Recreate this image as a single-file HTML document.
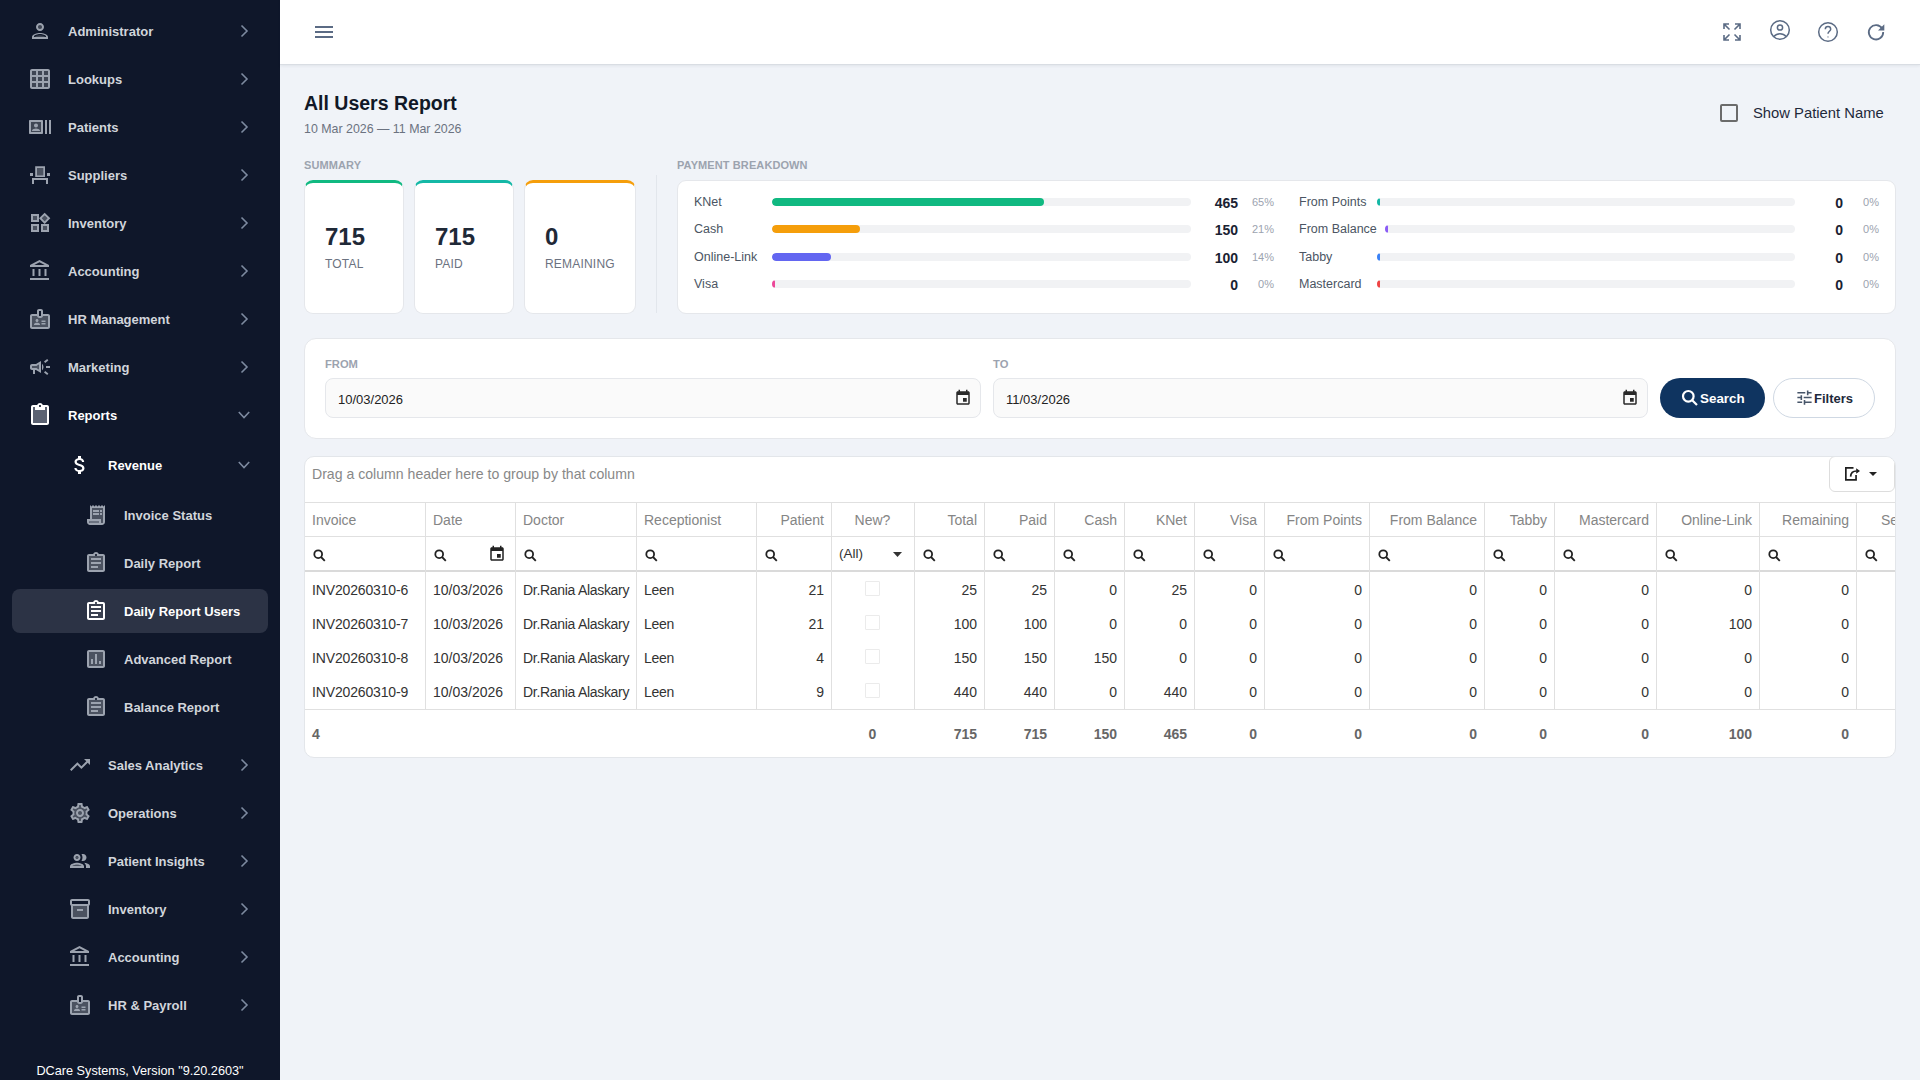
<!DOCTYPE html>
<html><head><meta charset="utf-8">
<style>
*{box-sizing:border-box;margin:0;padding:0}
html,body{width:1920px;height:1080px;overflow:hidden;background:#f0f3f8;font-family:"Liberation Sans",sans-serif}
body{position:relative}
.abs{position:absolute}
#sb{position:absolute;left:0;top:0;width:280px;height:1080px;background:#0f172a;color:#d1d5db}
#sb .tx{position:absolute;height:44px;line-height:44px;font-size:13px;font-weight:bold;white-space:nowrap}
#sb .w{color:#fff}
#ver{position:absolute;left:0;width:280px;top:1063px;line-height:16px;text-align:center;font-size:12.7px;color:#fff;white-space:nowrap}
#hdr{position:absolute;left:280px;top:0;width:1640px;height:65px;background:#fff;border-bottom:1px solid #d9dde3;box-shadow:0 1px 3px rgba(15,23,42,.07)}
.hb{position:absolute;left:315px;width:18px;height:2px;background:#5b6b84;border-radius:0}
.t1{position:absolute;left:304px;top:90px;font-size:19.5px;font-weight:bold;color:#111827;white-space:nowrap;line-height:26px}
.t2{position:absolute;left:304px;top:121px;font-size:12.4px;color:#6b7280;white-space:nowrap;line-height:16px}
.lbl{position:absolute;font-size:11px;font-weight:bold;color:#9ca3af;letter-spacing:.1px;white-space:nowrap;line-height:14px}
.card{position:absolute;background:#fff;border:1px solid #e5e7eb;border-radius:9px;overflow:hidden}
.scard{top:180px;height:134px;border-top:3px solid}
.scard .bar{position:absolute;left:-1px;right:-1px;top:0;height:3px}
.scard .num{position:absolute;left:20px;top:40px;font-size:24px;font-weight:bold;color:#1f2937;line-height:28px}
.scard .sl{position:absolute;left:20px;top:73.5px;letter-spacing:.2px;font-size:12px;color:#6b7280;line-height:14px;white-space:nowrap}
.prow{position:absolute;height:20px}
.prow .pl{position:absolute;left:0;top:0;line-height:20px;font-size:12.5px;color:#4b5563;white-space:nowrap}
.prow .tr{position:absolute;top:6px;height:8px;border-radius:4px;background:#f1f2f4;overflow:hidden}
.prow .fl{position:absolute;left:0;top:0;height:8px;border-radius:4px}
.prow .pv{position:absolute;top:.5px;line-height:20px;font-size:14px;font-weight:bold;color:#1a2232;text-align:right;width:40px}
.prow .pp{position:absolute;top:0;line-height:20px;font-size:11px;color:#9ca3af;text-align:right;width:30px}
.flab{position:absolute;top:358px;font-size:11.2px;font-weight:bold;color:#9ca3af;line-height:12px}
.inp{position:absolute;top:378px;height:40px;background:#fafafa;border:1px solid #e5e7eb;border-radius:8px}
.inp .v{position:absolute;left:12px;top:1px;line-height:40px;font-size:13px;color:#222}
.btn{position:absolute;top:378px;height:40px;border-radius:20px}
#tbl{position:absolute;left:304px;top:456px;width:1592px;height:302px;background:#fff;border:1px solid #e3e6ea;border-radius:10px;overflow:hidden;font-size:14px;color:#333}
#tbl .c{position:absolute;white-space:nowrap;line-height:34px;height:34px}
#tbl .h{color:#858585;font-size:14px;letter-spacing:0}
#tbl .vl{position:absolute;width:1px;background:#e0e0e0}
#tbl .hl{position:absolute;left:0;width:1590px;height:1px;background:#e0e0e0}
#tbl .f{font-weight:bold;color:#666;font-size:14px;letter-spacing:0}

</style></head><body>
<div id="sb">
<svg class="abs" style="left:28px;top:19px;width:24px;height:24px;color:#9ca3af" viewBox="0 0 24 24" fill="currentColor"><circle cx="12" cy="8" r="2.2" fill="#3d4452"/><path fill="#3d4452" d="M6.3 18.1c1-1 3.4-1.9 5.7-1.9s4.7.9 5.7 1.9z"/><path d="M12 14c-2.67 0-8 1.34-8 4v2h16v-2c0-2.66-5.33-4-8-4zm6 4H6v-.99c.2-.72 3.3-2.01 6-2.01s5.8 1.29 6 2v1zM12 4C9.79 4 8 5.79 8 8s1.79 4 4 4 4-1.79 4-4-1.79-4-4-4zm0 6c-1.1 0-2-.9-2-2s.9-2 2-2 2 .9 2 2-.9 2-2 2z"/></svg>
<div class="tx" style="left:68px;top:10px">Administrator</div>
<svg class="abs" style="left:240px;top:24px;width:9px;height:14px" viewBox="0 0 9 14"><polyline points="1.5,1.5 7,7 1.5,12.5" fill="none" stroke="#7d8aa0" stroke-width="1.6"/></svg>
<svg class="abs" style="left:28px;top:67px;width:24px;height:24px;color:#9ca3af" viewBox="0 0 24 24" fill="currentColor"><rect x="3" y="3" width="18" height="18" fill="#3f4654"/><path d="M20 2H4c-1.1 0-2 .9-2 2v16c0 1.1.9 2 2 2h16c1.1 0 2-.9 2-2V4c0-1.1-.9-2-2-2zM8 20H4v-4h4v4zm0-6H4v-4h4v4zm0-6H4V4h4v4zm6 12h-4v-4h4v4zm0-6h-4v-4h4v4zm0-6h-4V4h4v4zm6 12h-4v-4h4v4zm0-6h-4v-4h4v4zm0-6h-4V4h4v4z"/></svg>
<div class="tx" style="left:68px;top:58px">Lookups</div>
<svg class="abs" style="left:240px;top:72px;width:9px;height:14px" viewBox="0 0 9 14"><polyline points="1.5,1.5 7,7 1.5,12.5" fill="none" stroke="#7d8aa0" stroke-width="1.6"/></svg>
<svg class="abs" style="left:28px;top:115px;width:24px;height:24px;color:#9ca3af" viewBox="0 0 24 24" fill="currentColor"><rect x="2" y="6" width="12" height="12" fill="#3f4654"/><path d="M21 5v14h2V5h-2zm-4 14h2V5h-2v14zM14 5H2c-.55 0-1 .45-1 1v12c0 .55.45 1 1 1h12c.55 0 1-.45 1-1V6c0-.55-.45-1-1-1zm-1 12H3V7h10v10zM8 8.5c1.1 0 2 .9 2 2s-.9 2-2 2-2-.9-2-2 .9-2 2-2zM12 16H4v-.5c0-1.33 2.67-2 4-2s4 .67 4 2z"/></svg>
<div class="tx" style="left:68px;top:106px">Patients</div>
<svg class="abs" style="left:240px;top:120px;width:9px;height:14px" viewBox="0 0 9 14"><polyline points="1.5,1.5 7,7 1.5,12.5" fill="none" stroke="#7d8aa0" stroke-width="1.6"/></svg>
<svg class="abs" style="left:28px;top:163px;width:24px;height:24px;color:#9ca3af" viewBox="0 0 24 24" fill="currentColor"><path fill="#4b5260" d="M9 5h6v7H9z"/><path fill-rule="evenodd" d="M7.2 3.2h9.8v10.8H7.2zM9 5v7.2h6.2V5z"/><path d="M2 10h3v3H2zM19 10h3v3h-3zM4 15h16v2H4zM4 15h2v6H4zM18 15h2v6h-2z"/></svg>
<div class="tx" style="left:68px;top:154px">Suppliers</div>
<svg class="abs" style="left:240px;top:168px;width:9px;height:14px" viewBox="0 0 9 14"><polyline points="1.5,1.5 7,7 1.5,12.5" fill="none" stroke="#7d8aa0" stroke-width="1.6"/></svg>
<svg class="abs" style="left:28px;top:211px;width:24px;height:24px;color:#9ca3af" viewBox="0 0 24 24" fill="currentColor"><path fill="#4b5260" d="M5 5h4v4H5zm10 10h4v4h-4zM5 15h4v4H5zM16.66 4.52l-2.83 2.82 2.83 2.83 2.83-2.83z"/><path d="M16.66 1.69L11 7.34 16.66 13l5.66-5.66-5.66-5.65zm-2.83 5.65l2.83-2.83 2.83 2.83-2.83 2.83-2.83-2.83zM3 3v8h8V3H3zm6 6H5V5h4v4zM3 21h8v-8H3v8zm2-6h4v4H5v-4zm8-2v8h8v-8h-8zm6 6h-4v-4h4v4z"/></svg>
<div class="tx" style="left:68px;top:202px">Inventory</div>
<svg class="abs" style="left:240px;top:216px;width:9px;height:14px" viewBox="0 0 9 14"><polyline points="1.5,1.5 7,7 1.5,12.5" fill="none" stroke="#7d8aa0" stroke-width="1.6"/></svg>
<svg class="abs" style="left:28px;top:259px;width:24px;height:24px;color:#9ca3af" viewBox="0 0 24 24" fill="currentColor"><path d="M6.5 10h-2v7h2v-7zm6 0h-2v7h2v-7zm8.5 9H2v2h19v-2zm-2.5-9h-2v7h2v-7zm-7-6.74L16.71 6H6.29l5.21-2.74m0-2.26L2 6v2h19V6l-9.5-5z"/></svg>
<div class="tx" style="left:68px;top:250px">Accounting</div>
<svg class="abs" style="left:240px;top:264px;width:9px;height:14px" viewBox="0 0 9 14"><polyline points="1.5,1.5 7,7 1.5,12.5" fill="none" stroke="#7d8aa0" stroke-width="1.6"/></svg>
<svg class="abs" style="left:28px;top:307px;width:24px;height:24px;color:#9ca3af" viewBox="0 0 24 24" fill="currentColor"><path fill="#4b5260" d="M4 9h5c0 1.1.9 2 2 2h2c1.1 0 2-.9 2-2h5v11H4z"/><path d="M20 7h-5V4c0-1.1-.9-2-2-2h-2c-1.1 0-2 .9-2 2v3H4c-1.1 0-2 .9-2 2v11c0 1.1.9 2 2 2h16c1.1 0 2-.9 2-2V9c0-1.1-.9-2-2-2zM11 7V4h2v3 2h-2V7zm9 13H4V9h5c0 1.1.9 2 2 2h2c1.1 0 2-.9 2-2h5v11zM9 15c.83 0 1.5-.67 1.5-1.5S9.83 12 9 12s-1.5.67-1.5 1.5S8.17 15 9 15zm2.08 1.18c-.64-.28-1.34-.43-2.08-.43s-1.44.15-2.08.43C6.36 16.42 6 16.96 6 17.57V18h6v-.43c0-.61-.36-1.15-.92-1.39zM13.5 13.5h4V15h-4zm0 2.5h4v1.5h-4z"/></svg>
<div class="tx" style="left:68px;top:298px">HR Management</div>
<svg class="abs" style="left:240px;top:312px;width:9px;height:14px" viewBox="0 0 9 14"><polyline points="1.5,1.5 7,7 1.5,12.5" fill="none" stroke="#7d8aa0" stroke-width="1.6"/></svg>
<svg class="abs" style="left:28px;top:355px;width:24px;height:24px;color:#9ca3af" viewBox="0 0 24 24" fill="currentColor"><path fill="#4b5260" d="M9.03 10.71L11 9.53v4.94l-1.97-1.18-.48-.29H4v-2h4.55z"/><path d="M18 11v2h4v-2h-4zm-2 6.61c.96.71 2.21 1.65 3.2 2.39.4-.53.8-1.07 1.2-1.6-.99-.74-2.24-1.68-3.2-2.4-.4.54-.8 1.08-1.2 1.61zM20.4 5.6c-.4-.53-.8-1.07-1.2-1.6-.99.74-2.24 1.68-3.2 2.4.4.53.8 1.07 1.2 1.6.96-.72 2.21-1.65 3.2-2.4zM4 9c-1.1 0-2 .9-2 2v2c0 1.1.9 2 2 2h1v4h2v-4h1l5 3V6L8 9H4zm5.03 1.71L11 9.53v4.94l-1.97-1.18-.48-.29H4v-2h4.55l.48-.29zM15.5 12c0-1.33-.58-2.53-1.5-3.35v6.69c.92-.81 1.5-2.01 1.5-3.34z"/></svg>
<div class="tx" style="left:68px;top:346px">Marketing</div>
<svg class="abs" style="left:240px;top:360px;width:9px;height:14px" viewBox="0 0 9 14"><polyline points="1.5,1.5 7,7 1.5,12.5" fill="none" stroke="#7d8aa0" stroke-width="1.6"/></svg>
<svg class="abs" style="left:28px;top:403px;width:24px;height:24px;color:#fff" viewBox="0 0 24 24" fill="currentColor"><path fill="#5b6272" d="M17 7H7V4H5v16h14V4h-2z"/><path fill="#fff" d="M19 2h-4.18C14.4.84 13.3 0 12 0S9.6.84 9.18 2H5c-1.1 0-2 .9-2 2v16c0 1.1.9 2 2 2h14c1.1 0 2-.9 2-2V4c0-1.1-.9-2-2-2zm-7 0c.55 0 1 .45 1 1s-.45 1-1 1-1-.45-1-1 .45-1 1-1zm7 18H5V4h2v3h10V4h2v16z"/></svg>
<div class="tx w" style="left:68px;top:394px">Reports</div>
<svg class="abs" style="left:238px;top:411px;width:12px;height:8px" viewBox="0 0 12 8"><polyline points="0.8,1 6,6.5 11.2,1" fill="none" stroke="#7d8aa0" stroke-width="1.6"/></svg>
<svg class="abs" style="left:68px;top:453px;width:24px;height:24px;color:#fff" viewBox="0 0 24 24" fill="currentColor"><path d="M11.8 10.9c-2.27-.59-3-1.2-3-2.15 0-1.09 1.01-1.85 2.7-1.85 1.78 0 2.44.85 2.5 2.1h2.21c-.07-1.72-1.12-3.3-3.21-3.81V3h-3v2.16c-1.94.42-3.5 1.68-3.5 3.61 0 2.31 1.91 3.46 4.7 4.13 2.5.6 3 1.48 3 2.41 0 .69-.49 1.79-2.7 1.79-2.06 0-2.87-.92-2.98-2.1h-2.2c.12 2.19 1.76 3.42 3.68 3.83V21h3v-2.15c1.95-.37 3.5-1.5 3.5-3.55 0-2.84-2.43-3.81-4.7-4.4z"/></svg>
<div class="tx w" style="left:108px;top:444px">Revenue</div>
<svg class="abs" style="left:238px;top:461px;width:12px;height:8px" viewBox="0 0 12 8"><polyline points="0.8,1 6,6.5 11.2,1" fill="none" stroke="#7d8aa0" stroke-width="1.6"/></svg>
<div class="abs" style="left:12px;top:589px;width:256px;height:44px;background:#2c3345;border-radius:8px"></div>
<svg class="abs" style="left:84px;top:503px;width:24px;height:24px;color:#9ca3af" viewBox="0 0 24 24" fill="currentColor"><path fill="#4b5260" d="M8 5h11v14c0 .55-.45 1-1 1s-1-.45-1-1v-3H8z"/><path d="M19.5 3.5L18 2l-1.5 1.5L15 2l-1.5 1.5L12 2l-1.5 1.5L9 2 7.5 3.5 6 2v14H3v3c0 1.66 1.34 3 3 3h12c1.66 0 3-1.34 3-3V2l-1.5 1.5zM15 20H6c-.55 0-1-.45-1-1v-1h10v2zm4-1c0 .55-.45 1-1 1s-1-.45-1-1v-3H8V5h11v14z"/><path d="M9 7h6v2H9zm7 0h2v2h-2zm-7 3h6v2H9zm7 0h2v2h-2z"/><path fill="#6b7280" d="M5 18h10v2H6c-.55 0-1-.45-1-1z"/></svg>
<div class="tx" style="left:124px;top:494px">Invoice Status</div>
<svg class="abs" style="left:84px;top:551px;width:24px;height:24px;color:#9ca3af" viewBox="0 0 24 24" fill="currentColor"><path fill="#4b5260" d="M5 5h14v14H5z"/><path d="M19 3h-4.18C14.4 1.84 13.3 1 12 1s-2.4.84-2.82 2H5c-1.1 0-2 .9-2 2v14c0 1.1.9 2 2 2h14c1.1 0 2-.9 2-2V5c0-1.1-.9-2-2-2zm-7 0c.55 0 1 .45 1 1s-.45 1-1 1-1-.45-1-1 .45-1 1-1zm7 16H5V5h14v14zM7 15h7v2H7zm0-4h10v2H7zm0-4h10v2H7z"/></svg>
<div class="tx" style="left:124px;top:542px">Daily Report</div>
<svg class="abs" style="left:84px;top:599px;width:24px;height:24px;color:#fff" viewBox="0 0 24 24" fill="currentColor"><path fill="#3a4050" d="M5 5h14v14H5z"/><path fill="#fff" d="M19 3h-4.18C14.4 1.84 13.3 1 12 1s-2.4.84-2.82 2H5c-1.1 0-2 .9-2 2v14c0 1.1.9 2 2 2h14c1.1 0 2-.9 2-2V5c0-1.1-.9-2-2-2zm-7 0c.55 0 1 .45 1 1s-.45 1-1 1-1-.45-1-1 .45-1 1-1zm7 16H5V5h14v14zM7 15h7v2H7zm0-4h10v2H7zm0-4h10v2H7z"/></svg>
<div class="tx w" style="left:124px;top:590px">Daily Report Users</div>
<svg class="abs" style="left:84px;top:647px;width:24px;height:24px;color:#9ca3af" viewBox="0 0 24 24" fill="currentColor"><path fill="#4b5260" d="M5 5h14v14H5z"/><path d="M19 3H5c-1.1 0-2 .9-2 2v14c0 1.1.9 2 2 2h14c1.1 0 2-.9 2-2V5c0-1.1-.9-2-2-2zm0 16H5V5h14v14zM7 12h2v5H7zm4-5h2v10h-2zm4 7h2v3h-2z"/></svg>
<div class="tx" style="left:124px;top:638px">Advanced Report</div>
<svg class="abs" style="left:84px;top:695px;width:24px;height:24px;color:#9ca3af" viewBox="0 0 24 24" fill="currentColor"><path fill="#4b5260" d="M5 5h14v14H5z"/><path d="M19 3h-4.18C14.4 1.84 13.3 1 12 1s-2.4.84-2.82 2H5c-1.1 0-2 .9-2 2v14c0 1.1.9 2 2 2h14c1.1 0 2-.9 2-2V5c0-1.1-.9-2-2-2zm-7 0c.55 0 1 .45 1 1s-.45 1-1 1-1-.45-1-1 .45-1 1-1zm7 16H5V5h14v14zM7 15h7v2H7zm0-4h10v2H7zm0-4h10v2H7z"/></svg>
<div class="tx" style="left:124px;top:686px">Balance Report</div>
<svg class="abs" style="left:68px;top:753px;width:24px;height:24px;color:#9ca3af" viewBox="0 0 24 24" fill="currentColor"><path d="M16 6l2.29 2.29-4.88 4.88-4-4L2 16.59 3.41 18l6-6 4 4 6.3-6.29L22 12V6z"/></svg>
<div class="tx" style="left:108px;top:744px">Sales Analytics</div>
<svg class="abs" style="left:240px;top:758px;width:9px;height:14px" viewBox="0 0 9 14"><polyline points="1.5,1.5 7,7 1.5,12.5" fill="none" stroke="#7d8aa0" stroke-width="1.6"/></svg>
<svg class="abs" style="left:68px;top:801px;width:24px;height:24px;color:#9ca3af" viewBox="0 0 24 24" fill="currentColor"><path fill="#4b5260" d="M17.45 11.27c.04.31.05.52.05.73s-.02.43-.05.73l-.14 1.13.89.7 1.08.84-.7 1.21-1.27-.51-1.04-.42-.9.68c-.43.32-.84.56-1.25.73l-1.06.43-.16 1.13-.2 1.35h-1.4l-.19-1.35-.16-1.13-1.06-.43c-.43-.18-.83-.41-1.23-.71l-.91-.7-1.06.43-1.27.51-.7-1.21 1.08-.84.89-.7-.14-1.13c-.03-.31-.05-.54-.05-.74s.02-.43.05-.73l.14-1.13-.89-.7-1.08-.84.7-1.21 1.27.51 1.04.42.9-.68c.43-.32.84-.56 1.25-.73l1.06-.43.16-1.13.2-1.35h1.39l.19 1.35.16 1.13 1.06.43c.43.18.83.41 1.23.71l.91.7 1.06-.43 1.27-.51.7 1.21-1.07.85-.89.7.14 1.13z"/><path d="M19.43 12.98c.04-.32.07-.64.07-.98 0-.34-.03-.66-.07-.98l2.11-1.65c.19-.15.24-.42.12-.64l-2-3.46c-.09-.16-.26-.25-.44-.25-.06 0-.12.01-.17.03l-2.49 1c-.52-.4-1.08-.73-1.69-.98l-.38-2.65C14.46 2.18 14.25 2 14 2h-4c-.25 0-.46.18-.49.42l-.38 2.65c-.61.25-1.170.59-1.69.98l-2.49-1c-.06-.02-.12-.03-.18-.03-.17 0-.34.09-.43.25l-2 3.46c-.13.22-.07.49.12.64l2.11 1.65c-.04.32-.07.65-.07.98 0 .33.03.66.07.98l-2.11 1.65c-.19.15-.24.42-.12.64l2 3.46c.09.16.26.25.44.25.06 0 .12-.01.17-.03l2.49-1c.52.4 1.08.73 1.69.98l.38 2.65c.03.24.24.42.49.42h4c.25 0 .46-.18.49-.42l.38-2.65c.61-.25 1.17-.59 1.690-.98l2.49 1c.06.02.12.03.18.03.17 0 .34-.09.43-.25l2-3.46c.12-.22.07-.49-.12-.64l-2.11-1.65zm-1.98-1.71c.04.31.05.52.05.73 0 .21-.02.43-.05.73l-.14 1.13.89.7 1.08.84-.7 1.21-1.27-.51-1.04-.42-.9.68c-.43.32-.84.56-1.25.73l-1.06.43-.16 1.13-.2 1.35h-1.4l-.19-1.35-.16-1.13-1.06-.43c-.43-.18-.83-.41-1.23-.71l-.91-.7-1.06.43-1.27.51-.7-1.21 1.08-.84.89-.7-.14-1.13c-.03-.31-.05-.54-.05-.74s.02-.43.05-.73l.14-1.13-.89-.7-1.08-.84.7-1.21 1.27.51 1.04.42.9-.68c.43-.32.84-.56 1.25-.73l1.06-.43.16-1.13.2-1.35h1.39l.19 1.35.16 1.13 1.06.43c.43.18.83.41 1.23.71l.91.7 1.06-.43 1.27-.51.7 1.21-1.07.85-.89.7.14 1.13zM12 8c-2.21 0-4 1.79-4 4s1.79 4 4 4 4-1.79 4-4-1.79-4-4-4zm0 6c-1.1 0-2-.9-2-2s.9-2 2-2 2 .9 2 2-.9 2-2 2z"/></svg>
<div class="tx" style="left:108px;top:792px">Operations</div>
<svg class="abs" style="left:240px;top:806px;width:9px;height:14px" viewBox="0 0 9 14"><polyline points="1.5,1.5 7,7 1.5,12.5" fill="none" stroke="#7d8aa0" stroke-width="1.6"/></svg>
<svg class="abs" style="left:68px;top:849px;width:24px;height:24px;color:#9ca3af" viewBox="0 0 24 24" fill="currentColor"><path fill="#4b5260" d="M9 8.5m-1.5 0a1.5 1.5 0 1 0 3 0a1.5 1.5 0 1 0-3 0M4.34 17c.84-.58 2.87-1.25 4.66-1.25s3.82.67 4.66 1.25z"/><path d="M9 13.75c-2.34 0-7 1.17-7 3.5V19h14v-1.75c0-2.33-4.66-3.5-7-3.5zM4.34 17c.84-.58 2.87-1.25 4.66-1.25s3.82.67 4.66 1.25H4.34zM9 12c1.93 0 3.5-1.57 3.5-3.5S10.93 5 9 5 5.5 6.57 5.5 8.5 7.07 12 9 12zm0-5c.83 0 1.5.67 1.5 1.5S9.83 10 9 10s-1.5-.67-1.5-1.5S8.170 7 9 7zm7.04 6.81c1.16.84 1.96 1.96 1.96 3.44V19h4v-1.75c0-2.02-3.5-3.17-5.96-3.44zM15 12c1.93 0 3.5-1.57 3.5-3.5S16.93 5 15 5c-.54 0-1.04.13-1.5.35.63.89 1 1.98 1 3.15s-.37 2.26-1 3.15c.46.22.96.35 1.5.35z"/></svg>
<div class="tx" style="left:108px;top:840px">Patient Insights</div>
<svg class="abs" style="left:240px;top:854px;width:9px;height:14px" viewBox="0 0 9 14"><polyline points="1.5,1.5 7,7 1.5,12.5" fill="none" stroke="#7d8aa0" stroke-width="1.6"/></svg>
<svg class="abs" style="left:68px;top:897px;width:24px;height:24px;color:#9ca3af" viewBox="0 0 24 24" fill="currentColor"><path fill="#4b5260" d="M5 9h14v11H5z"/><path d="M20 2H4c-1 0-2 .9-2 2v3.01c0 .72.43 1.34 1 1.69V20c0 1.1 1.1 2 2 2h14c.9 0 2-.9 2-2V8.7c.57-.35 1-.97 1-1.69V4c0-1.1-1-2-2-2zm-1 18H5V9h14v11zm1-13H4V4h16v3z"/><path d="M9 12h6v2H9z"/></svg>
<div class="tx" style="left:108px;top:888px">Inventory</div>
<svg class="abs" style="left:240px;top:902px;width:9px;height:14px" viewBox="0 0 9 14"><polyline points="1.5,1.5 7,7 1.5,12.5" fill="none" stroke="#7d8aa0" stroke-width="1.6"/></svg>
<svg class="abs" style="left:68px;top:945px;width:24px;height:24px;color:#9ca3af" viewBox="0 0 24 24" fill="currentColor"><path d="M6.5 10h-2v7h2v-7zm6 0h-2v7h2v-7zm8.5 9H2v2h19v-2zm-2.5-9h-2v7h2v-7zm-7-6.74L16.71 6H6.29l5.21-2.74m0-2.26L2 6v2h19V6l-9.5-5z"/></svg>
<div class="tx" style="left:108px;top:936px">Accounting</div>
<svg class="abs" style="left:240px;top:950px;width:9px;height:14px" viewBox="0 0 9 14"><polyline points="1.5,1.5 7,7 1.5,12.5" fill="none" stroke="#7d8aa0" stroke-width="1.6"/></svg>
<svg class="abs" style="left:68px;top:993px;width:24px;height:24px;color:#9ca3af" viewBox="0 0 24 24" fill="currentColor"><path fill="#4b5260" d="M4 9h5c0 1.1.9 2 2 2h2c1.1 0 2-.9 2-2h5v11H4z"/><path d="M20 7h-5V4c0-1.1-.9-2-2-2h-2c-1.1 0-2 .9-2 2v3H4c-1.1 0-2 .9-2 2v11c0 1.1.9 2 2 2h16c1.1 0 2-.9 2-2V9c0-1.1-.9-2-2-2zM11 7V4h2v3 2h-2V7zm9 13H4V9h5c0 1.1.9 2 2 2h2c1.1 0 2-.9 2-2h5v11zM9 15c.83 0 1.5-.67 1.5-1.5S9.83 12 9 12s-1.5.67-1.5 1.5S8.17 15 9 15zm2.08 1.18c-.64-.28-1.34-.43-2.08-.43s-1.44.15-2.08.43C6.36 16.42 6 16.96 6 17.57V18h6v-.43c0-.61-.36-1.15-.92-1.39zM13.5 13.5h4V15h-4zm0 2.5h4v1.5h-4z"/></svg>
<div class="tx" style="left:108px;top:984px">HR &amp; Payroll</div>
<svg class="abs" style="left:240px;top:998px;width:9px;height:14px" viewBox="0 0 9 14"><polyline points="1.5,1.5 7,7 1.5,12.5" fill="none" stroke="#7d8aa0" stroke-width="1.6"/></svg>
<div id="ver">DCare Systems, Version "9.20.2603"</div>
</div>
<div id="hdr"></div>
<div class="hb" style="top:26px"></div><div class="hb" style="top:31px"></div><div class="hb" style="top:36px"></div>
<!-- header icons -->
<svg class="abs" style="left:1720px;top:20px;width:24px;height:24px" viewBox="0 0 24 24" fill="none" stroke="#5b6b84" stroke-width="1.6"><path d="M4 9V4h5M4 4l5.5 5.5M20 9V4h-5M20 4l-5.5 5.5M4 15v5h5M4 20l5.5-5.5M20 15v5h-5M20 20l-5.5-5.5"/></svg>
<svg class="abs" style="left:1768px;top:18px;width:24px;height:24px" viewBox="0 0 24 24" fill="none" stroke="#5b6b84" stroke-width="1.5"><circle cx="12" cy="12" r="9.3"/><circle cx="12" cy="9.5" r="2.6"/><path d="M5.8 18.6c1.6-1.9 3.8-2.9 6.2-2.9s4.6 1 6.2 2.9"/></svg>
<svg class="abs" style="left:1816px;top:20px;width:24px;height:24px" viewBox="0 0 24 24" fill="none" stroke="#5b6b84" stroke-width="1.5"><circle cx="12" cy="12" r="9.3"/><path d="M9.3 9.3c0-1.6 1.2-2.7 2.7-2.7s2.7 1.1 2.7 2.6c0 2-2.7 2.2-2.7 4.6"/><circle cx="12" cy="16.9" r=".6" fill="#5b6b84" stroke="none"/></svg>
<svg class="abs" style="left:1864px;top:20px;width:24px;height:24px" viewBox="0 0 24 24"><path d="M18.2 8.6A7.2 7.2 0 1 0 19.2 12" fill="none" stroke="#5b6b84" stroke-width="1.8"/><path d="M20.3 4.3v6.3h-6.3z" fill="#5b6b84"/></svg>
<!-- title -->
<div class="t1">All Users Report</div>
<div class="t2">10 Mar 2026 — 11 Mar 2026</div>
<div class="abs" style="left:1720px;top:104px;width:18px;height:18px;border:2px solid #6b6b6b;border-radius:2px"></div>
<div class="abs" style="left:1753px;top:104px;font-size:14.8px;color:#1e293b;line-height:18px;white-space:nowrap">Show Patient Name</div>
<!-- summary -->
<div class="lbl" style="left:304px;top:158px">SUMMARY</div>
<div class="card scard" style="left:304px;width:100px;border-top-color:#10b981"><div class="num">715</div><div class="sl">TOTAL</div></div>
<div class="card scard" style="left:414px;width:100px;border-top-color:#14b8a6"><div class="num">715</div><div class="sl">PAID</div></div>
<div class="card scard" style="left:524px;width:112px;border-top-color:#f59e0b"><div class="num">0</div><div class="sl">REMAINING</div></div>
<div class="abs" style="left:656px;top:175px;width:1px;height:138px;background:#e2e6ec"></div>
<div class="lbl" style="left:677px;top:158px">PAYMENT BREAKDOWN</div>
<div class="card" style="left:677px;top:180px;width:1219px;height:134px"></div>
<div class="prow" style="left:694px;top:192px;width:600px"><div class="pl">KNet</div><div class="tr" style="left:78px;width:419px"><div class="fl" style="width:272px;background:#10b981"></div></div><div class="pv" style="left:504px">465</div><div class="pp" style="left:550px">65%</div></div>
<div class="prow" style="left:694px;top:219px;width:600px"><div class="pl">Cash</div><div class="tr" style="left:78px;width:419px"><div class="fl" style="width:88px;background:#f59e0b"></div></div><div class="pv" style="left:504px">150</div><div class="pp" style="left:550px">21%</div></div>
<div class="prow" style="left:694px;top:247px;width:600px"><div class="pl">Online-Link</div><div class="tr" style="left:78px;width:419px"><div class="fl" style="width:58.5px;background:#6366f1"></div></div><div class="pv" style="left:504px">100</div><div class="pp" style="left:550px">14%</div></div>
<div class="prow" style="left:694px;top:274px;width:600px"><div class="pl">Visa</div><div class="tr" style="left:78px;width:419px"><div class="fl" style="width:3px;background:#ec4899"></div></div><div class="pv" style="left:504px">0</div><div class="pp" style="left:550px">0%</div></div>
<div class="prow" style="left:1299px;top:192px;width:600px"><div class="pl">From Points</div><div class="tr" style="left:78px;width:418px"><div class="fl" style="width:3px;background:#14b8a6"></div></div><div class="pv" style="left:504px">0</div><div class="pp" style="left:550px">0%</div></div>
<div class="prow" style="left:1299px;top:219px;width:600px"><div class="pl">From Balance</div><div class="tr" style="left:86px;width:410px"><div class="fl" style="width:3px;background:#8b5cf6"></div></div><div class="pv" style="left:504px">0</div><div class="pp" style="left:550px">0%</div></div>
<div class="prow" style="left:1299px;top:247px;width:600px"><div class="pl">Tabby</div><div class="tr" style="left:78px;width:418px"><div class="fl" style="width:3px;background:#3b82f6"></div></div><div class="pv" style="left:504px">0</div><div class="pp" style="left:550px">0%</div></div>
<div class="prow" style="left:1299px;top:274px;width:600px"><div class="pl">Mastercard</div><div class="tr" style="left:78px;width:418px"><div class="fl" style="width:3px;background:#ef4444"></div></div><div class="pv" style="left:504px">0</div><div class="pp" style="left:550px">0%</div></div>
<!-- filter card -->
<div class="card" style="left:304px;top:338px;width:1592px;height:101px;border-radius:12px"></div>
<div class="flab" style="left:325px">FROM</div>
<div class="flab" style="left:993px">TO</div>
<div class="inp" style="left:325px;width:656px"><div class="v">10/03/2026</div><svg class="abs" style="right:8px;top:10px;width:18px;height:18px" viewBox="0 0 24 24" fill="#2a2a2a"><path d="M17 12h-5v5h5v-5zM16 1v2H8V1H6v2H5c-1.11 0-1.99.9-1.99 2L3 19c0 1.1.89 2 2 2h14c1.1 0 2-.9 2-2V5c0-1.1-.9-2-2-2h-1V1h-2zm3 18H5V8h14v11z"/></svg></div>
<div class="inp" style="left:993px;width:655px"><div class="v">11/03/2026</div><svg class="abs" style="right:8px;top:10px;width:18px;height:18px" viewBox="0 0 24 24" fill="#2a2a2a"><path d="M17 12h-5v5h5v-5zM16 1v2H8V1H6v2H5c-1.11 0-1.99.9-1.99 2L3 19c0 1.1.89 2 2 2h14c1.1 0 2-.9 2-2V5c0-1.1-.9-2-2-2h-1V1h-2zm3 18H5V8h14v11z"/></svg></div>
<div class="btn" style="left:1660px;width:105px;background:#0f3460"></div>
<svg class="abs" style="left:1681px;top:389px;width:18px;height:18px" viewBox="0 0 18 18" fill="none" stroke="#fff" stroke-width="2.2"><circle cx="7.3" cy="7.3" r="5.3"/><path d="M11.2 11.2l4.8 4.8"/></svg>
<div class="abs" style="left:1700px;top:379px;line-height:40px;font-size:13.4px;font-weight:bold;color:#fff">Search</div>
<div class="btn" style="left:1773px;width:102px;background:#fff;border:1px solid #cfd8e3"></div>
<svg class="abs" style="left:1795px;top:388px;width:19px;height:19px" viewBox="0 0 24 24" fill="#475569"><path d="M3 17v2h6v-2H3zM3 5v2h10V5H3zm10 16v-2h8v-2h-8v-2h-2v6h2zM7 9v2H3v2h4v2h2V9H7zm14 4v-2H11v2h10zm-6-4h2V7h4V5h-4V3h-2v6z"/></svg>
<div class="abs" style="left:1814px;top:379px;line-height:40px;font-size:13px;font-weight:bold;color:#1e293b">Filters</div>
<div id="tbl">
<div class="abs" style="left:7px;top:-1px;line-height:36px;font-size:14.1px;letter-spacing:0;color:#888;white-space:nowrap">Drag a column header here to group by that column</div>
<div class="abs" style="left:1524px;top:-1px;width:66px;height:36px;border:1px solid #ddd;border-radius:6px;background:#fff"></div>
<svg class="abs" style="left:1538px;top:7px;width:18px;height:18px" viewBox="0 0 18 18" fill="none" stroke="#1f1f1f" stroke-width="1.7"><path d="M10.5 3.85H2.85V15.9H13.05V11"/><path d="M7.6 12.6C7.8 9 10 7 13.6 7"/><path d="M13.2 4.2L17 7L13.2 9.8z" fill="#1f1f1f" stroke="none"/></svg>
<svg class="abs" style="left:1564px;top:15px;width:8px;height:4px" viewBox="0 0 8 4"><path d="M0 0h8L4 4z" fill="#222"/></svg>
<div class="c h" style="left:7px;width:105px;text-align:left;top:46px">Invoice</div>
<div class="c h" style="left:128px;width:74px;text-align:left;top:46px">Date</div>
<div class="c h" style="left:218px;width:105px;text-align:left;top:46px">Doctor</div>
<div class="c h" style="left:339px;width:104px;text-align:left;top:46px">Receptionist</div>
<div class="c h" style="left:459px;width:60px;text-align:right;top:46px">Patient</div>
<div class="c h" style="left:526px;width:83px;text-align:center;top:46px">New?</div>
<div class="c h" style="left:617px;width:55px;text-align:right;top:46px">Total</div>
<div class="c h" style="left:687px;width:55px;text-align:right;top:46px">Paid</div>
<div class="c h" style="left:757px;width:55px;text-align:right;top:46px">Cash</div>
<div class="c h" style="left:827px;width:55px;text-align:right;top:46px">KNet</div>
<div class="c h" style="left:897px;width:55px;text-align:right;top:46px">Visa</div>
<div class="c h" style="left:967px;width:90px;text-align:right;top:46px">From Points</div>
<div class="c h" style="left:1072px;width:100px;text-align:right;top:46px">From Balance</div>
<div class="c h" style="left:1187px;width:55px;text-align:right;top:46px">Tabby</div>
<div class="c h" style="left:1257px;width:87px;text-align:right;top:46px">Mastercard</div>
<div class="c h" style="left:1359px;width:88px;text-align:right;top:46px">Online-Link</div>
<div class="c h" style="left:1462px;width:82px;text-align:right;top:46px">Remaining</div>
<div class="c h" style="left:1576px;width:118px;text-align:left;top:46px">Se</div>
<svg class="abs" style="left:8px;top:92px;width:13px;height:13px" viewBox="0 0 13 13" fill="none" stroke="#222" stroke-width="1.8"><circle cx="5.2" cy="5.2" r="3.9"/><path d="M8 8l3.8 3.8"/></svg>
<svg class="abs" style="left:129px;top:92px;width:13px;height:13px" viewBox="0 0 13 13" fill="none" stroke="#222" stroke-width="1.8"><circle cx="5.2" cy="5.2" r="3.9"/><path d="M8 8l3.8 3.8"/></svg>
<svg class="abs" style="left:183px;top:88px;width:18px;height:18px" viewBox="0 0 24 24" fill="#222"><path d="M17 12h-5v5h5v-5zM16 1v2H8V1H6v2H5c-1.11 0-1.99.9-1.99 2L3 19c0 1.1.89 2 2 2h14c1.1 0 2-.9 2-2V5c0-1.1-.9-2-2-2h-1V1h-2zm3 18H5V8h14v11z"/></svg>
<svg class="abs" style="left:219px;top:92px;width:13px;height:13px" viewBox="0 0 13 13" fill="none" stroke="#222" stroke-width="1.8"><circle cx="5.2" cy="5.2" r="3.9"/><path d="M8 8l3.8 3.8"/></svg>
<svg class="abs" style="left:340px;top:92px;width:13px;height:13px" viewBox="0 0 13 13" fill="none" stroke="#222" stroke-width="1.8"><circle cx="5.2" cy="5.2" r="3.9"/><path d="M8 8l3.8 3.8"/></svg>
<svg class="abs" style="left:460px;top:92px;width:13px;height:13px" viewBox="0 0 13 13" fill="none" stroke="#222" stroke-width="1.8"><circle cx="5.2" cy="5.2" r="3.9"/><path d="M8 8l3.8 3.8"/></svg>
<div class="c" style="left:534px;top:80px;font-size:13.5px;color:#333">(All)</div>
<svg class="abs" style="left:588px;top:95px;width:9px;height:5px" viewBox="0 0 9 5"><path d="M0 0h9L4.5 5z" fill="#333"/></svg>
<svg class="abs" style="left:618px;top:92px;width:13px;height:13px" viewBox="0 0 13 13" fill="none" stroke="#222" stroke-width="1.8"><circle cx="5.2" cy="5.2" r="3.9"/><path d="M8 8l3.8 3.8"/></svg>
<svg class="abs" style="left:688px;top:92px;width:13px;height:13px" viewBox="0 0 13 13" fill="none" stroke="#222" stroke-width="1.8"><circle cx="5.2" cy="5.2" r="3.9"/><path d="M8 8l3.8 3.8"/></svg>
<svg class="abs" style="left:758px;top:92px;width:13px;height:13px" viewBox="0 0 13 13" fill="none" stroke="#222" stroke-width="1.8"><circle cx="5.2" cy="5.2" r="3.9"/><path d="M8 8l3.8 3.8"/></svg>
<svg class="abs" style="left:828px;top:92px;width:13px;height:13px" viewBox="0 0 13 13" fill="none" stroke="#222" stroke-width="1.8"><circle cx="5.2" cy="5.2" r="3.9"/><path d="M8 8l3.8 3.8"/></svg>
<svg class="abs" style="left:898px;top:92px;width:13px;height:13px" viewBox="0 0 13 13" fill="none" stroke="#222" stroke-width="1.8"><circle cx="5.2" cy="5.2" r="3.9"/><path d="M8 8l3.8 3.8"/></svg>
<svg class="abs" style="left:968px;top:92px;width:13px;height:13px" viewBox="0 0 13 13" fill="none" stroke="#222" stroke-width="1.8"><circle cx="5.2" cy="5.2" r="3.9"/><path d="M8 8l3.8 3.8"/></svg>
<svg class="abs" style="left:1073px;top:92px;width:13px;height:13px" viewBox="0 0 13 13" fill="none" stroke="#222" stroke-width="1.8"><circle cx="5.2" cy="5.2" r="3.9"/><path d="M8 8l3.8 3.8"/></svg>
<svg class="abs" style="left:1188px;top:92px;width:13px;height:13px" viewBox="0 0 13 13" fill="none" stroke="#222" stroke-width="1.8"><circle cx="5.2" cy="5.2" r="3.9"/><path d="M8 8l3.8 3.8"/></svg>
<svg class="abs" style="left:1258px;top:92px;width:13px;height:13px" viewBox="0 0 13 13" fill="none" stroke="#222" stroke-width="1.8"><circle cx="5.2" cy="5.2" r="3.9"/><path d="M8 8l3.8 3.8"/></svg>
<svg class="abs" style="left:1360px;top:92px;width:13px;height:13px" viewBox="0 0 13 13" fill="none" stroke="#222" stroke-width="1.8"><circle cx="5.2" cy="5.2" r="3.9"/><path d="M8 8l3.8 3.8"/></svg>
<svg class="abs" style="left:1463px;top:92px;width:13px;height:13px" viewBox="0 0 13 13" fill="none" stroke="#222" stroke-width="1.8"><circle cx="5.2" cy="5.2" r="3.9"/><path d="M8 8l3.8 3.8"/></svg>
<svg class="abs" style="left:1560px;top:92px;width:13px;height:13px" viewBox="0 0 13 13" fill="none" stroke="#222" stroke-width="1.8"><circle cx="5.2" cy="5.2" r="3.9"/><path d="M8 8l3.8 3.8"/></svg>
<div class="c" style="left:7px;width:105px;text-align:left;top:116px"><span style="letter-spacing:-0.15px">INV20260310-6</span></div>
<div class="c" style="left:128px;width:74px;text-align:left;top:116px">10/03/2026</div>
<div class="c" style="left:218px;width:105px;text-align:left;top:116px"><span style="letter-spacing:-0.3px">Dr.Rania Alaskary</span></div>
<div class="c" style="left:339px;width:104px;text-align:left;top:116px"><span style="letter-spacing:-0.3px">Leen</span></div>
<div class="c" style="left:459px;width:60px;text-align:right;top:116px">21</div>
<div class="abs" style="left:560px;top:124px;width:15px;height:15px;border:1px solid #ebebeb;border-radius:1px"></div>
<div class="c" style="left:617px;width:55px;text-align:right;top:116px">25</div>
<div class="c" style="left:687px;width:55px;text-align:right;top:116px">25</div>
<div class="c" style="left:757px;width:55px;text-align:right;top:116px">0</div>
<div class="c" style="left:827px;width:55px;text-align:right;top:116px">25</div>
<div class="c" style="left:897px;width:55px;text-align:right;top:116px">0</div>
<div class="c" style="left:967px;width:90px;text-align:right;top:116px">0</div>
<div class="c" style="left:1072px;width:100px;text-align:right;top:116px">0</div>
<div class="c" style="left:1187px;width:55px;text-align:right;top:116px">0</div>
<div class="c" style="left:1257px;width:87px;text-align:right;top:116px">0</div>
<div class="c" style="left:1359px;width:88px;text-align:right;top:116px">0</div>
<div class="c" style="left:1462px;width:82px;text-align:right;top:116px">0</div>
<div class="c" style="left:7px;width:105px;text-align:left;top:150px"><span style="letter-spacing:-0.15px">INV20260310-7</span></div>
<div class="c" style="left:128px;width:74px;text-align:left;top:150px">10/03/2026</div>
<div class="c" style="left:218px;width:105px;text-align:left;top:150px"><span style="letter-spacing:-0.3px">Dr.Rania Alaskary</span></div>
<div class="c" style="left:339px;width:104px;text-align:left;top:150px"><span style="letter-spacing:-0.3px">Leen</span></div>
<div class="c" style="left:459px;width:60px;text-align:right;top:150px">21</div>
<div class="abs" style="left:560px;top:158px;width:15px;height:15px;border:1px solid #ebebeb;border-radius:1px"></div>
<div class="c" style="left:617px;width:55px;text-align:right;top:150px">100</div>
<div class="c" style="left:687px;width:55px;text-align:right;top:150px">100</div>
<div class="c" style="left:757px;width:55px;text-align:right;top:150px">0</div>
<div class="c" style="left:827px;width:55px;text-align:right;top:150px">0</div>
<div class="c" style="left:897px;width:55px;text-align:right;top:150px">0</div>
<div class="c" style="left:967px;width:90px;text-align:right;top:150px">0</div>
<div class="c" style="left:1072px;width:100px;text-align:right;top:150px">0</div>
<div class="c" style="left:1187px;width:55px;text-align:right;top:150px">0</div>
<div class="c" style="left:1257px;width:87px;text-align:right;top:150px">0</div>
<div class="c" style="left:1359px;width:88px;text-align:right;top:150px">100</div>
<div class="c" style="left:1462px;width:82px;text-align:right;top:150px">0</div>
<div class="c" style="left:7px;width:105px;text-align:left;top:184px"><span style="letter-spacing:-0.15px">INV20260310-8</span></div>
<div class="c" style="left:128px;width:74px;text-align:left;top:184px">10/03/2026</div>
<div class="c" style="left:218px;width:105px;text-align:left;top:184px"><span style="letter-spacing:-0.3px">Dr.Rania Alaskary</span></div>
<div class="c" style="left:339px;width:104px;text-align:left;top:184px"><span style="letter-spacing:-0.3px">Leen</span></div>
<div class="c" style="left:459px;width:60px;text-align:right;top:184px">4</div>
<div class="abs" style="left:560px;top:192px;width:15px;height:15px;border:1px solid #ebebeb;border-radius:1px"></div>
<div class="c" style="left:617px;width:55px;text-align:right;top:184px">150</div>
<div class="c" style="left:687px;width:55px;text-align:right;top:184px">150</div>
<div class="c" style="left:757px;width:55px;text-align:right;top:184px">150</div>
<div class="c" style="left:827px;width:55px;text-align:right;top:184px">0</div>
<div class="c" style="left:897px;width:55px;text-align:right;top:184px">0</div>
<div class="c" style="left:967px;width:90px;text-align:right;top:184px">0</div>
<div class="c" style="left:1072px;width:100px;text-align:right;top:184px">0</div>
<div class="c" style="left:1187px;width:55px;text-align:right;top:184px">0</div>
<div class="c" style="left:1257px;width:87px;text-align:right;top:184px">0</div>
<div class="c" style="left:1359px;width:88px;text-align:right;top:184px">0</div>
<div class="c" style="left:1462px;width:82px;text-align:right;top:184px">0</div>
<div class="c" style="left:7px;width:105px;text-align:left;top:218px"><span style="letter-spacing:-0.15px">INV20260310-9</span></div>
<div class="c" style="left:128px;width:74px;text-align:left;top:218px">10/03/2026</div>
<div class="c" style="left:218px;width:105px;text-align:left;top:218px"><span style="letter-spacing:-0.3px">Dr.Rania Alaskary</span></div>
<div class="c" style="left:339px;width:104px;text-align:left;top:218px"><span style="letter-spacing:-0.3px">Leen</span></div>
<div class="c" style="left:459px;width:60px;text-align:right;top:218px">9</div>
<div class="abs" style="left:560px;top:226px;width:15px;height:15px;border:1px solid #ebebeb;border-radius:1px"></div>
<div class="c" style="left:617px;width:55px;text-align:right;top:218px">440</div>
<div class="c" style="left:687px;width:55px;text-align:right;top:218px">440</div>
<div class="c" style="left:757px;width:55px;text-align:right;top:218px">0</div>
<div class="c" style="left:827px;width:55px;text-align:right;top:218px">440</div>
<div class="c" style="left:897px;width:55px;text-align:right;top:218px">0</div>
<div class="c" style="left:967px;width:90px;text-align:right;top:218px">0</div>
<div class="c" style="left:1072px;width:100px;text-align:right;top:218px">0</div>
<div class="c" style="left:1187px;width:55px;text-align:right;top:218px">0</div>
<div class="c" style="left:1257px;width:87px;text-align:right;top:218px">0</div>
<div class="c" style="left:1359px;width:88px;text-align:right;top:218px">0</div>
<div class="c" style="left:1462px;width:82px;text-align:right;top:218px">0</div>
<div class="c f" style="left:7px;width:105px;text-align:left;top:260px">4</div>
<div class="c f" style="left:526px;width:83px;text-align:center;top:260px">0</div>
<div class="c f" style="left:617px;width:55px;text-align:right;top:260px">715</div>
<div class="c f" style="left:687px;width:55px;text-align:right;top:260px">715</div>
<div class="c f" style="left:757px;width:55px;text-align:right;top:260px">150</div>
<div class="c f" style="left:827px;width:55px;text-align:right;top:260px">465</div>
<div class="c f" style="left:897px;width:55px;text-align:right;top:260px">0</div>
<div class="c f" style="left:967px;width:90px;text-align:right;top:260px">0</div>
<div class="c f" style="left:1072px;width:100px;text-align:right;top:260px">0</div>
<div class="c f" style="left:1187px;width:55px;text-align:right;top:260px">0</div>
<div class="c f" style="left:1257px;width:87px;text-align:right;top:260px">0</div>
<div class="c f" style="left:1359px;width:88px;text-align:right;top:260px">100</div>
<div class="c f" style="left:1462px;width:82px;text-align:right;top:260px">0</div>
<div class="hl" style="top:45px"></div>
<div class="hl" style="top:79px"></div>
<div class="hl" style="top:113px;height:2px;background:#dadada"></div>
<div class="hl" style="top:252px"></div>
<div class="vl" style="left:120px;top:45px;height:207px"></div>
<div class="vl" style="left:210px;top:45px;height:207px"></div>
<div class="vl" style="left:331px;top:45px;height:207px"></div>
<div class="vl" style="left:451px;top:45px;height:207px"></div>
<div class="vl" style="left:526px;top:45px;height:207px"></div>
<div class="vl" style="left:609px;top:45px;height:207px"></div>
<div class="vl" style="left:679px;top:45px;height:207px"></div>
<div class="vl" style="left:749px;top:45px;height:207px"></div>
<div class="vl" style="left:819px;top:45px;height:207px"></div>
<div class="vl" style="left:889px;top:45px;height:207px"></div>
<div class="vl" style="left:959px;top:45px;height:207px"></div>
<div class="vl" style="left:1064px;top:45px;height:207px"></div>
<div class="vl" style="left:1179px;top:45px;height:207px"></div>
<div class="vl" style="left:1249px;top:45px;height:207px"></div>
<div class="vl" style="left:1351px;top:45px;height:207px"></div>
<div class="vl" style="left:1454px;top:45px;height:207px"></div>
<div class="vl" style="left:1551px;top:45px;height:207px"></div>
</div>

</body></html>
